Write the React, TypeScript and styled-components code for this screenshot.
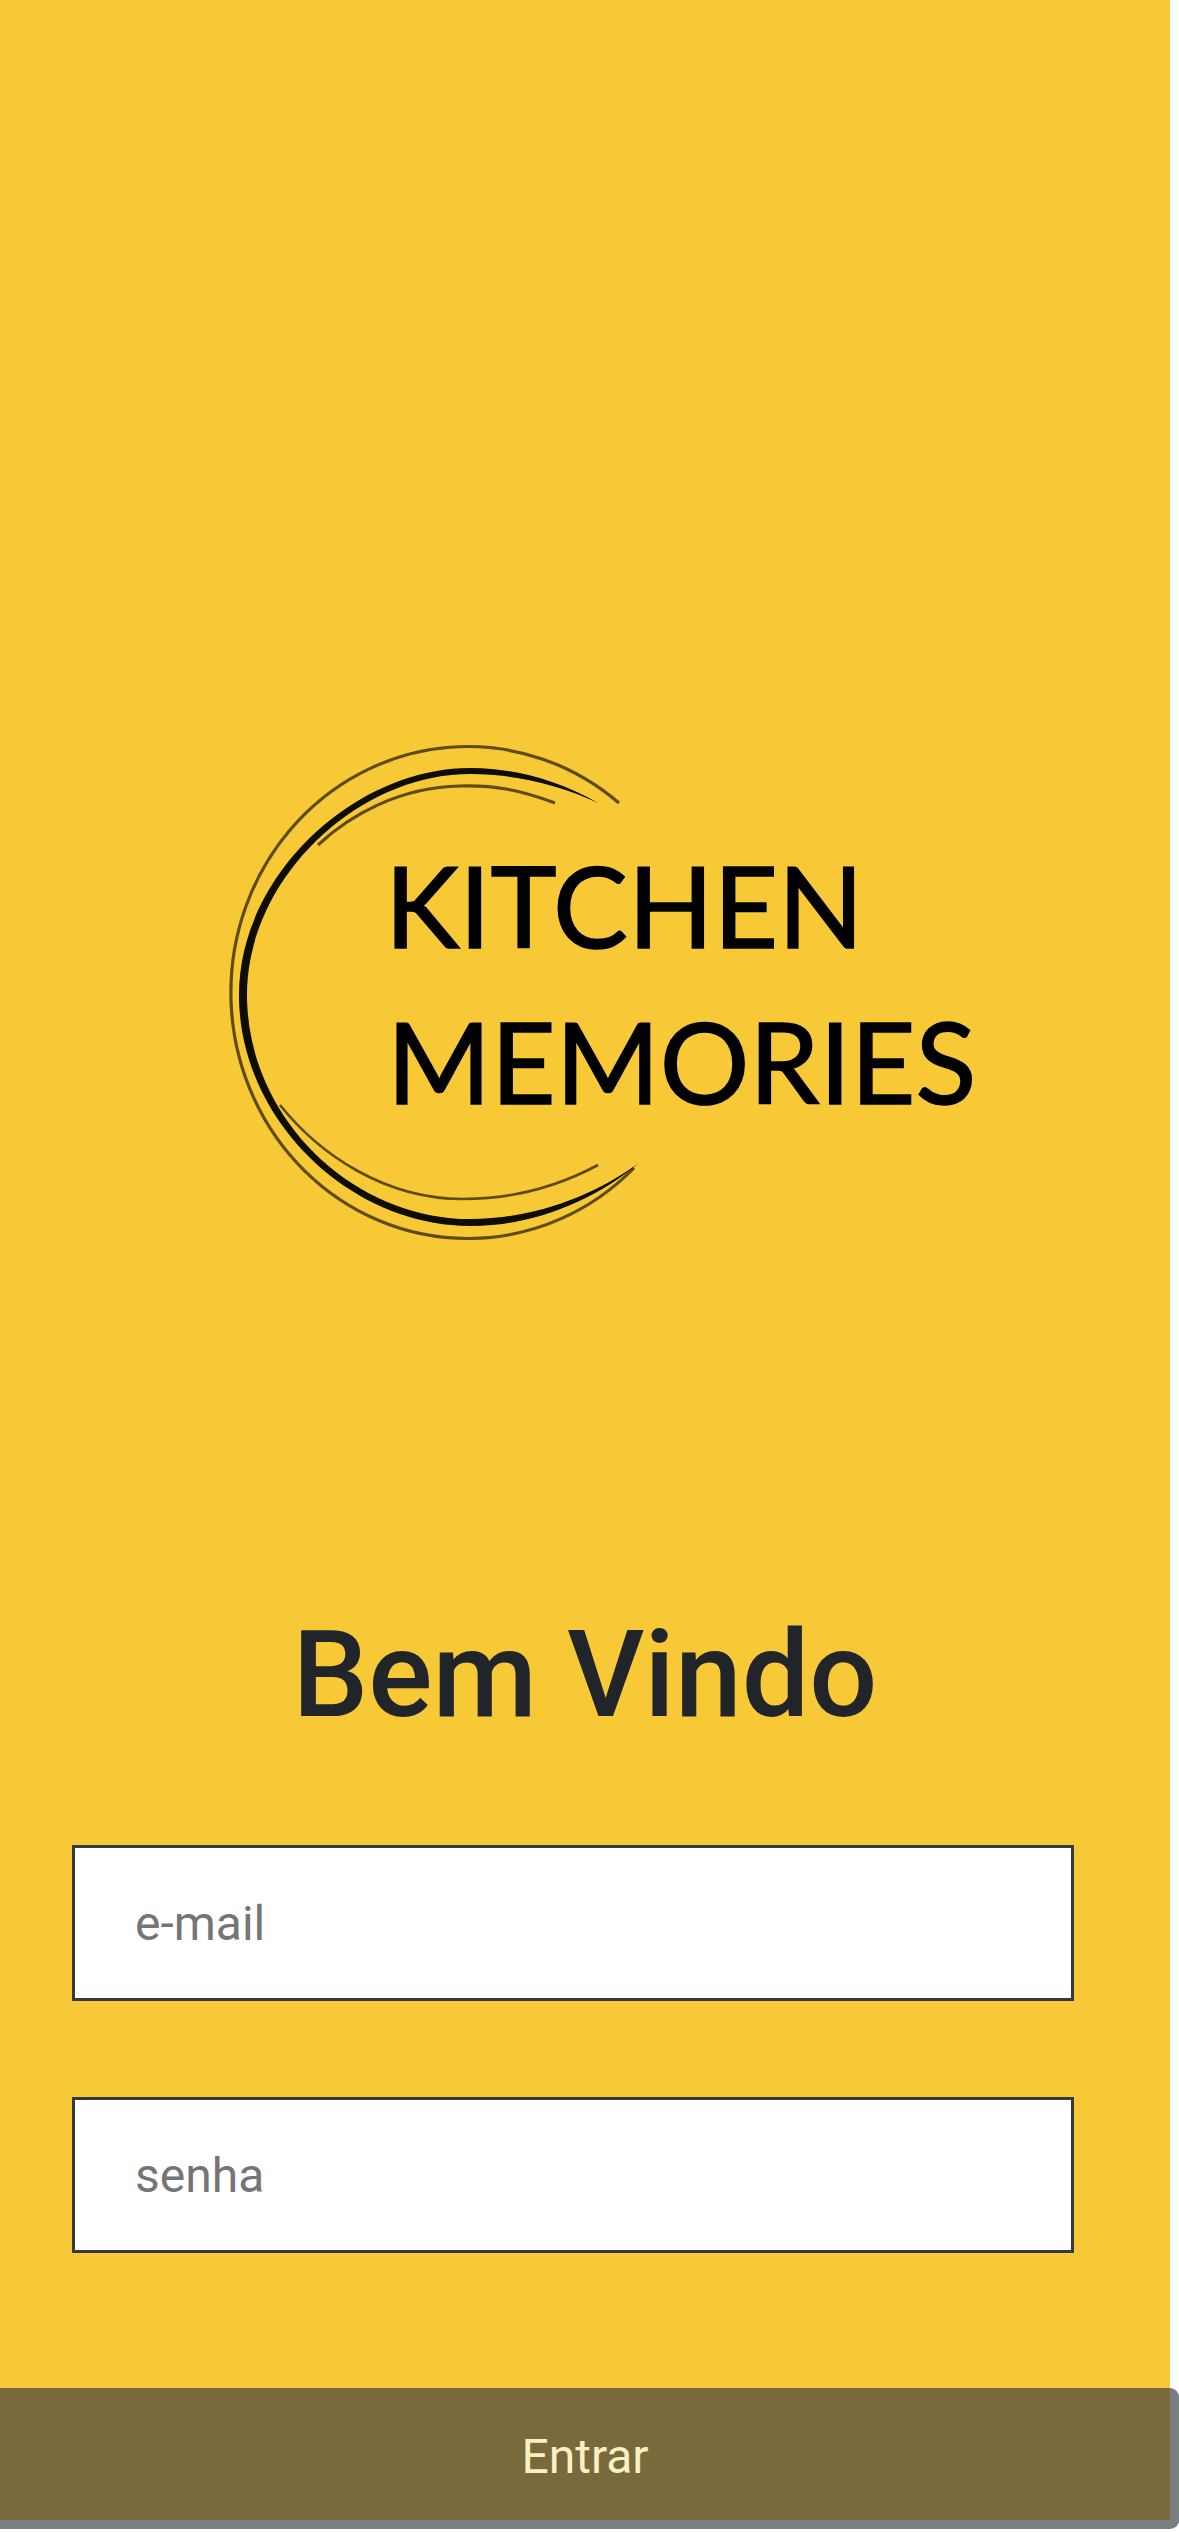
import { createGlobalStyle } from "styled-components";
import styled from "styled-components";

const GlobalStyle = createGlobalStyle`
  html, body {
    margin: 0;
    padding: 0;
    background: #fff;
  }
  * {
    box-sizing: border-box;
  }
`;

const Logo = () => (
  <LogoSvg viewBox="190 730 790 520">
    <defs>
      <filter id="soft" x="-5%" y="-5%" width="110%" height="110%">
        <feGaussianBlur stdDeviation="0.7" />
      </filter>
    </defs>
    <g filter="url(#soft)">
      {/* outer thin ring */}
      <path d="M619 803 A237 246 0 1 0 634 1168" fill="none" stroke="#5e4c08" strokeWidth="3.2" />
      {/* inner thin strokes */}
      <path d="M555 803 C520 790 495 785 460 786 C400 787 350 815 318 845" fill="none" stroke="#5e4c08" strokeWidth="3.2" />
      <path d="M598 1165 C555 1188 510 1199 463 1199 C385 1199 320 1155 280 1105" fill="none" stroke="#5e4c08" strokeWidth="2.6" />
      {/* main brush stroke */}
      <path
        d="M598 803 C560 781 515 768 470 768 C355 768 239 875 239 995 C239 1120 350 1226 470 1226 C535 1226 595 1200 639 1163 C595 1195 535 1219 470 1219 C353 1219 247 1118 247 995 C247 878 358 774 470 774 C515 774 560 785 598 803 Z"
        fill="#0a0800"
      />
      <LogoText x="385" y="948">KITCHEN</LogoText>
      <LogoText x="387" y="1104">MEMORIES</LogoText>
    </g>
  </LogoSvg>
);

export default function App() {
  return (
    <>
      <GlobalStyle />
      <Page>
        <Main>
          <Logo />
          <Title>Bem Vindo</Title>
          <Form>
            <Field type="text" placeholder="e-mail" />
            <Field type="password" placeholder="senha" />
          </Form>
        </Main>
        <SubmitButton>Entrar</SubmitButton>
      </Page>
    </>
  );
}

const Page = styled.div`
  width: 1179px;
  height: 2532px;
  font-family: Roboto, sans-serif;
  overflow: hidden;
`;

const Main = styled.main`
  width: 1170px;
  height: 2388px;
  background: #f8c937;
  padding-top: 730px;
  display: flex;
  flex-direction: column;
  align-items: center;
`;

const LogoSvg = styled.svg`
  display: block;
  width: 790px;
  height: 520px;
  flex: none;
`;

const LogoText = styled.text`
  font-family: Lato, sans-serif;
  font-size: 112px;
  fill: #050400;
  stroke: #050400;
  stroke-width: 1.6px;
`;

const Title = styled.h1`
  margin: 353px 0 98px;
  height: 144px;
  font-size: 120px;
  line-height: 144px;
  font-weight: 500;
  color: #212529;
`;

const Form = styled.form`
  width: 100%;
  padding: 0 96px 0 72px;
  display: flex;
  flex-direction: column;
  gap: 96px;
`;

const Field = styled.input`
  display: block;
  width: 100%;
  height: 156px;
  padding: 0 60px;
  background: #fff;
  border: 3px solid #343a40;
  border-radius: 0;
  outline: none;
  font-family: Roboto, sans-serif;
  font-size: 48px;
  color: #495057;
  &::placeholder {
    color: #757575;
    opacity: 1;
  }
`;

const SubmitButton = styled.button`
  display: block;
  width: 1179px;
  height: 141px;
  padding: 5px 0 0;
  background: #786a3c;
  border: 0 solid #7a7d82;
  border-right-width: 9px;
  border-bottom-width: 9px;
  border-radius: 0 9px 9px 0;
  font-family: Roboto, sans-serif;
  font-size: 48px;
  color: #fdf0c0;
`;
